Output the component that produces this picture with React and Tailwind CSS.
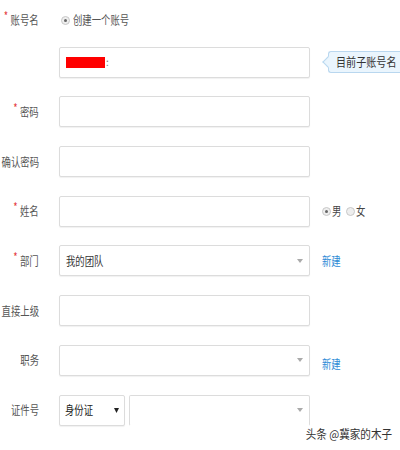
import React from 'react'

const font = { fontFamily: '"Noto Sans CJK SC", "Liberation Sans", sans-serif' }

function Label({ text, required }) {
  return (
    <div className="w-[39px] shrink-0 flex justify-end items-center">
      <span className="inline-block origin-right scale-x-[0.78] text-[12px] leading-none whitespace-nowrap text-[#555]">
        {required && <span className="text-[#e4393c] text-[12px] mr-[3px] relative -top-[4px]">*</span>}
        {text}
      </span>
    </div>
  )
}

function Narrow({ children, className = '' }) {
  return (
    <span className={`inline-block origin-left scale-x-[0.78] text-[12px] leading-none whitespace-nowrap ${className}`}>
      {children}
    </span>
  )
}

function Box({ children, className = '' }) {
  return (
    <div className={`h-[31px] border border-[#dcdcdc] rounded-[2px] bg-white shadow-[0_1px_1px_rgba(0,0,0,0.06)] flex items-center ${className}`}>
      {children}
    </div>
  )
}

function Arrow({ color = '#aaa', w = 6, h = 4 }) {
  return (
    <svg width={w} height={h} viewBox={`0 0 ${w} ${h}`} className="shrink-0">
      <path d={`M0 0 L${w} 0 L${w / 2} ${h} Z`} fill={color} />
    </svg>
  )
}

function Radio({ checked }) {
  return (
    <span className="w-[9px] h-[9px] rounded-full border border-[#c8c8c8] bg-[#eee] flex items-center justify-center shrink-0">
      {checked && <span className="w-[3px] h-[3px] rounded-full bg-[#666]" />}
    </span>
  )
}

function Row({ label, required, children, right }) {
  return (
    <div className="flex items-center h-[31px]">
      <Label text={label} required={required} />
      <div className="ml-[20px] w-[251px] shrink-0">{children}</div>
      <div className="ml-[12px] flex items-center">{right}</div>
    </div>
  )
}

export default function App() {
  return (
    <div className="relative w-[400px] h-[450px] bg-white overflow-hidden" style={font}>
      <div className="pt-[12px] flex flex-col gap-[18.7px]">
        <div className="flex items-center h-[16px]">
          <Label text="账号名" required />
          <div className="ml-[22px] flex items-center gap-[3px]">
            <Radio checked />
            <Narrow className="text-[#555]">创建一个账号</Narrow>
          </div>
        </div>

        <Row
          label=""
          right={
            <div className="relative ml-[6px] h-[22px] pl-[7px] border border-[#b9d7ef] bg-[#eaf5fd] rounded-l-[3px] flex items-center w-[74px] border-r-0">
              <span className="absolute -left-[5px] top-[6px] w-[8px] h-[8px] rotate-45 bg-[#eaf5fd] border-l border-b border-[#b9d7ef]" />
              <span className="relative inline-block origin-left scale-x-[0.84] text-[12px] leading-none whitespace-nowrap text-[#333]">
                目前子账号名
              </span>
            </div>
          }
        >
          <Box className="px-[6px]">
            <span className="w-[39px] h-[11px] bg-[#ff0000]" />
            <span className="text-[10px] text-[#777] leading-none ml-[1px]">:</span>
          </Box>
        </Row>

        <Row label="密码" required>
          <Box />
        </Row>

        <Row label="确认密码">
          <Box />
        </Row>

        <Row
          label="姓名"
          required
          right={
            <div className="flex items-center gap-[1px]">
              <Radio checked />
              <Narrow className="text-[#444] w-[13px]">男</Narrow>
              <Radio />
              <Narrow className="text-[#444]">女</Narrow>
            </div>
          }
        >
          <Box />
        </Row>

        <Row label="部门" required right={<Narrow className="text-[#2a8ad6]">新建</Narrow>}>
          <Box className="px-[6px] justify-between">
            <Narrow className="text-[#333]">我的团队</Narrow>
            <Arrow />
          </Box>
        </Row>

        <Row label="直接上级">
          <Box />
        </Row>

        <Row label="职务" right={<Narrow className="text-[#2a8ad6] relative top-[4px]">新建</Narrow>}>
          <Box className="px-[6px] justify-end">
            <Arrow />
          </Box>
        </Row>

        <Row label="证件号">
          <div className="flex items-center gap-[4px]">
            <Box className="w-[66px] px-[5px] justify-between shrink-0">
              <Narrow className="text-[#222]">身份证</Narrow>
              <Arrow color="#222" w={5} h={5} />
            </Box>
            <Box className="flex-1 px-[6px] justify-end border-b-transparent shadow-none">
              <Arrow />
            </Box>
          </div>
        </Row>
      </div>

      <div className="absolute right-[8px] bottom-[6px]">
        <span className="text-[12px] text-[#333] leading-none whitespace-nowrap inline-block origin-right scale-x-[0.88]">
          头条 @冀家的木子
        </span>
      </div>
    </div>
  )
}
